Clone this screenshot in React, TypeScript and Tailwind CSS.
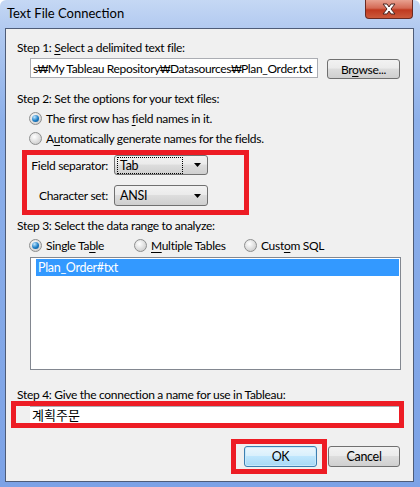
import React from 'react';

const font = "font-['Lato','DejaVu_Sans','Noto_Sans_CJK_KR',sans-serif]";

const Radio: React.FC<{ checked?: boolean }> = ({ checked }) => (
  <span className="relative inline-flex w-[13px] h-[13px] rounded-full border border-[#8e8f8f] bg-[radial-gradient(circle_at_40%_35%,#ffffff,#d4d4d4_70%,#c4c4c4)] items-center justify-center shrink-0">
    {checked && (
      <span className="w-[7px] h-[7px] rounded-full bg-[radial-gradient(circle_at_35%_30%,#bfe6ff,#1b7cc4_55%,#0a4f8a)]" />
    )}
  </span>
);

const U: React.FC<{ children: React.ReactNode }> = ({ children }) => (
  <span className="underline underline-offset-2">{children}</span>
);

// won sign as the Korean locale shows a backslash
const W: React.FC = () => <span className="font-['Liberation_Sans',sans-serif] text-[11px] tracking-[-0.5px]">₩</span>;

const Combo: React.FC<{ value: string; focused?: boolean; h: string }> = ({ value, focused, h }) => (
  <div
    className={`w-[94px] ${h} rounded-[3px] border border-[#707070] bg-[linear-gradient(#f2f2f2,#ebebeb_45%,#dddddd_50%,#cfcfcf)] flex items-center pl-[3px] pr-[6px]`}
  >
    <span
      className={`flex-1 h-[15px] flex items-center pl-[2px] text-[12.5px] leading-[15px] text-black ${
        focused ? 'outline-1 outline-dotted outline-black mr-[12px]' : ''
      }`}
    >
      {value}
    </span>
    <svg width="7" height="4" viewBox="0 0 7 4" className="shrink-0">
      <path d="M0 0h7L3.5 4z" fill="#000" />
    </svg>
  </div>
);

const App: React.FC = () => {
  return (
    <div
      className={`w-[420px] h-[487px] flex flex-col bg-[linear-gradient(180deg,#c5d8f4_0px,#b2caf0_28px,#8db0ea_120px,#7ca2e6_487px)] rounded-t-[6px] overflow-hidden ${font}`}
    >
      {/* Title bar */}
      <div className="h-[28px] flex items-start shrink-0">
        <span className="pl-[7px] pt-[5px] text-[13px] leading-[17px] text-black">Text File Connection</span>
        <div className="ml-auto mr-[7px] w-[48px] h-[19px] rounded-b-[4px] border border-t-0 border-[#6a2a22] bg-[linear-gradient(#e8a190,#d46a55_45%,#c0391f_55%,#cc5a3c)] flex items-center justify-center">
          <svg width="16" height="12" viewBox="0 0 16 12">
            <path
              d="M2 1h4l2 3 2-3h4l-4 5 4 5h-4l-2-3-2 3H2l4-5z"
              fill="#fff"
              stroke="#4a2420"
              strokeWidth="1"
              strokeLinejoin="round"
            />
          </svg>
        </div>
      </div>

      {/* Client area */}
      <div className="ml-[5px] w-[409px] h-[454px] border border-[#4e5c78] bg-[#f0f0f0] flex flex-col text-[12px] tracking-[-0.3px] text-black whitespace-nowrap">
        <div className="mt-[11px] pl-[11px] leading-[15px]">
          Step 1: <U>S</U>elect a delimited text file:
        </div>
        <div className="mt-[3px] flex items-start">
          <div className="ml-[24px] w-[288px] h-[20px] border border-[#abadb3] bg-white pl-[2px] pt-[2px] overflow-hidden leading-[15px] text-[12px] tracking-[-0.35px]">
            <span>
              s<W />My Tableau Repository<W />Datasources<W />Plan_Order.txt
            </span>
          </div>
          <button className="ml-[9px] mt-[1px] w-[73px] h-[20px] rounded-[3px] border border-[#707070] bg-[linear-gradient(#f2f2f2,#ebebeb_45%,#dddddd_50%,#cfcfcf)] text-[12px] leading-[15px]">
            Br<U>o</U>wse...
          </button>
        </div>

        <div className="mt-[12px] pl-[11px] leading-[15px]">Step 2: Set the options for your text files:</div>
        <div className="mt-[5px] ml-[23px] flex items-center gap-[4px] leading-[15px]">
          <Radio checked />
          <span>
            The first row has <U>f</U>ield names in it.
          </span>
        </div>
        <div className="mt-[5px] ml-[23px] flex items-center gap-[4px] leading-[15px]">
          <Radio />
          <span>
            A<U>u</U>tomatically generate names for the fields.
          </span>
        </div>

        {/* Highlighted separator / charset */}
        <div className="mt-[4px] ml-[16px] w-[227px] h-[65px] border-[5px] border-[#ed1c24] flex flex-col">
          <div className="flex items-center">
            <span className="w-[81px] text-right leading-[15px]">Field separator:</span>
            <div className="ml-[6px]">
              <Combo value="Tab" focused h="h-[20px]" />
            </div>
          </div>
          <div className="mt-[10px] flex items-center">
            <span className="w-[81px] text-right leading-[15px]">Character set:</span>
            <div className="ml-[6px]">
              <Combo value="ANSI" h="h-[21px]" />
            </div>
          </div>
        </div>

        <div className="mt-[3px] pl-[11px] leading-[15px]">Step 3: Select the data range to analyze:</div>
        <div className="mt-[5px] ml-[23px] flex items-center leading-[15px]">
          <div className="w-[105px] flex items-center gap-[4px]">
            <Radio checked />
            <span>
              Single Ta<U>b</U>le
            </span>
          </div>
          <div className="w-[110px] flex items-center gap-[4px]">
            <Radio />
            <span>
              <U>M</U>ultiple Tables
            </span>
          </div>
          <div className="flex items-center gap-[4px]">
            <Radio />
            <span>
              Cust<U>o</U>m SQL
            </span>
          </div>
        </div>
        <div className="mt-[4px] ml-[24px] w-[371px] h-[113px] border border-[#828790] bg-white pl-[5px] pr-[1px] pt-[1px]">
          <div className="h-[17px] bg-[#3399ff] text-white pl-[2px] leading-[17px] text-[12.5px]">Plan_Order#txt</div>
        </div>

        <div className="mt-[19px] pl-[11px] leading-[12px] h-[12px]">
          Step 4: Give the connection a name for use in Tableau:
        </div>
        <div className="ml-[5px] w-[393px] h-[27px] border-[5px] border-[#ed1c24] flex">
          <div className="ml-[14px] flex-1 h-[17px] border-t border-[#abadb3] bg-white flex items-center pl-[2px] text-[13px] leading-[16px] tracking-normal">
            계획주문
          </div>
        </div>

        <div className="mt-[11px] flex items-start">
          <div className="ml-[225px] w-[96px] h-[35px] border-[5px] border-[#ed1c24] pl-[8px] pt-[2px]">
            <button className="w-[73px] h-[21px] rounded-[3px] border border-[#3c7fb1] bg-[linear-gradient(#eaf6fd,#d9f0fc_45%,#bee6fd_50%,#a7d9f5)] shadow-[inset_0_0_0_1px_#c8e8fa] text-[12.5px] leading-[15px]">
              OK
            </button>
          </div>
          <button className="ml-[1px] mt-[7px] w-[72px] h-[21px] rounded-[3px] border border-[#707070] bg-[linear-gradient(#f2f2f2,#ebebeb_45%,#dddddd_50%,#cfcfcf)] text-[12.5px] leading-[15px]">
            Cancel
          </button>
        </div>
      </div>
    </div>
  );
};

export default App;
